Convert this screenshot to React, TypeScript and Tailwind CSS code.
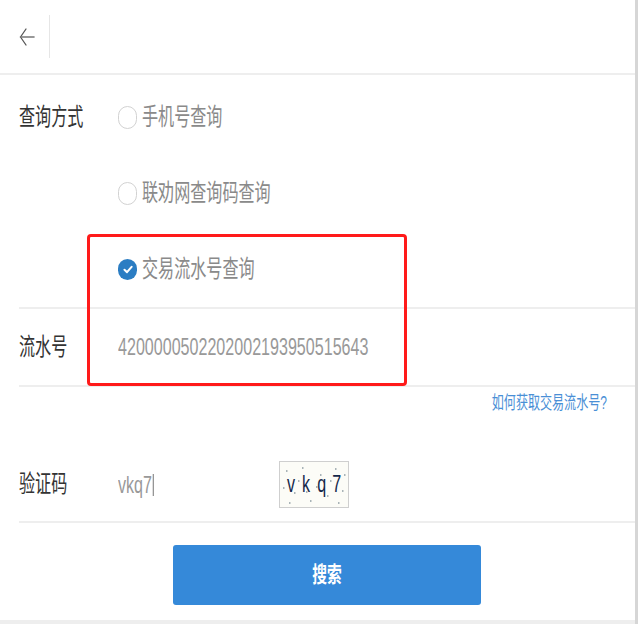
import type { ReactNode } from "react";

const Sq = ({ children, className = "" }: { children: ReactNode; className?: string }) => (
  <span className={`inline-block whitespace-nowrap scale-x-[0.67] ${className}`}>{children}</span>
);

const Radio = ({ checked = false, label }: { checked?: boolean; label: string }) => (
  <div className="flex h-[76px] items-center">
    {checked ? (
      <span className="flex h-[21px] w-[19px] shrink-0 items-center justify-center rounded-full bg-[#2b7dc3]">
        <svg width="10" height="9" viewBox="0 0 10 9" fill="none">
          <path d="M1.5 4.8 L4 7.2 L8.6 1.8" stroke="#fff" strokeWidth="2" strokeLinecap="round" strokeLinejoin="round" />
        </svg>
      </span>
    ) : (
      <span className="h-[23px] w-[19px] shrink-0 rounded-full border-[1.5px] border-[#d2d2d2] bg-white" />
    )}
    <div className="ml-[5px] w-[200px] text-[24px] leading-none text-[#8a8a8a]">
      <Sq className="origin-left">{label}</Sq>
    </div>
  </div>
);

const Label = ({ children }: { children: string }) => (
  <div className="w-[99px] shrink-0 text-[24px] leading-none text-[#333]">
    <Sq className="origin-left">{children}</Sq>
  </div>
);

const Captcha = () => (
  <div className="relative flex h-[47px] w-[70px] items-center justify-between border border-[#cfcfcf] bg-[#fcfcf7] px-[4px]">
    <svg className="absolute inset-0" width="68" height="45" viewBox="0 0 68 45">
      {[
        [6, 8], [14, 30], [22, 5], [30, 38], [40, 12], [47, 33], [55, 6], [62, 28], [9, 40], [36, 24],
        [18, 18], [58, 40], [50, 18], [26, 29], [64, 12], [3, 25],
      ].map(([x, y], i) => (
        <rect key={i} x={x} y={y} width="1.5" height="2" fill="#a9b4b8" />
      ))}
    </svg>
    {["v", "k", "q", "7"].map((c) => (
      <span key={c} className="relative flex w-[14px] justify-center text-[24px] leading-none text-[#14284a]">
        <Sq className="origin-center">{c}</Sq>
      </span>
    ))}
  </div>
);

export default function App() {
  return (
    <div
      className="relative h-[624px] w-[638px] overflow-hidden border-r-[3px] border-[#d6d6d6] bg-white"
      style={{ fontFamily: '"Liberation Sans", "Noto Sans CJK SC", sans-serif' }}
    >
      <header className="flex h-[75px] items-start border-b-2 border-[#eeeeee]">
        <div className="flex h-[74px] w-[49px] items-center justify-center pl-[4px]">
          <svg width="16" height="20" viewBox="0 0 16 20" fill="none">
            <path d="M7 2 L1.5 10 L7 18" stroke="#555" strokeWidth="1.3" strokeLinecap="round" strokeLinejoin="round" />
            <path d="M1.5 10 H15" stroke="#777" strokeWidth="1.6" strokeLinecap="round" />
          </svg>
        </div>
        <div className="mt-[15px] h-[43px] w-px bg-[#e6e6e6]" />
      </header>

      <div className="pl-[19px]">
        <div className="flex border-b-2 border-[#eeeeee] pt-[4px]">
          <div className="flex h-[76px] items-center">
            <Label>查询方式</Label>
          </div>
          <div className="flex flex-col">
            <Radio label="手机号查询" />
            <Radio label="联劝网查询码查询" />
            <Radio checked label="交易流水号查询" />
          </div>
        </div>

        <div className="flex h-[78px] items-center border-b-2 border-[#eeeeee]">
          <Label>流水号</Label>
          <div className="text-[24px] leading-none text-[#999]">
            <Sq className="origin-left">4200000502202002193950515643</Sq>
          </div>
        </div>

        <div className="flex h-[32px] items-center justify-end pr-[28px]">
          <a className="text-[18px] leading-none text-[#4a8fd6]">
            <Sq className="origin-right">如何获取交易流水号?</Sq>
          </a>
        </div>

        <div className="mt-[28px] flex h-[76px] items-center border-b-2 border-[#eeeeee]">
          <Label>验证码</Label>
          <div className="flex w-[161px] items-center text-[24px] leading-none text-[#999]">
            <Sq className="origin-left">
              vkq7<span className="ml-[1px] inline-block h-[22px] w-px translate-y-[3px] bg-[#333]" />
            </Sq>
          </div>
          <Captcha />
        </div>
      </div>

      <div className="pl-[173px] pt-[22px]">
        <button className="flex h-[60px] w-[308px] items-center justify-center rounded-[3px] bg-[#3589d9] text-[22px] font-bold leading-none text-white">
          <Sq className="origin-center">搜索</Sq>
        </button>
      </div>

      <div className="absolute bottom-0 left-0 right-0 h-[4px] bg-[#eeeeee]" />

      <div className="pointer-events-none absolute left-[87px] top-[234px] h-[152px] w-[320px] rounded-[4px] border-[3px] border-[#ff1a1a]" />
    </div>
  );
}
